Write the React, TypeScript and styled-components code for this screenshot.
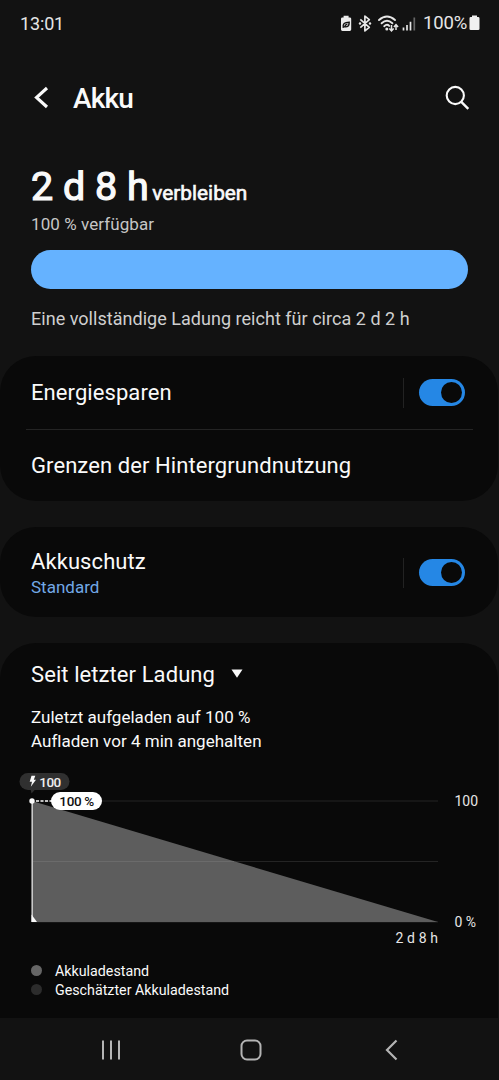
import React from "react";
import styled, { createGlobalStyle } from "styled-components";

const GlobalStyle = createGlobalStyle`
  * { box-sizing: border-box; }
  html, body { margin: 0; background: #121212; }
  body { font-family: Roboto, "Noto Sans", sans-serif; color: #fafafa; }
`;

const Screen = styled.div`
  width: 499px;
  height: 1080px;
  display: flex;
  flex-direction: column;
  background: #121212;
  overflow: hidden;
`;

const StatusBar = styled.header`
  height: 46px;
  flex: none;
  display: flex;
  align-items: center;
  justify-content: space-between;
  padding: 0 19px 0 20px;
  font-size: 18px;
  letter-spacing: -0.15px;
  color: #e6e6e6;
`;

const StatusIcons = styled.div`
  display: flex;
  align-items: center;
`;

const StatusPercent = styled.span`
  margin: 0 2px 0 6px;
  font-size: 18.5px;
  letter-spacing: -0.2px;
`;

const TitleBar = styled.div`
  height: 103px;
  flex: none;
  display: flex;
  align-items: center;
  padding: 0 29px 0 33px;
`;

const Title = styled.h1`
  flex: 1;
  margin: 2px 0 0 23px;
  font-size: 28px;
  line-height: 36px;
  font-weight: 500;
  letter-spacing: -0.8px;
`;

const Summary = styled.section`
  flex: none;
  height: 207px;
  display: flex;
  flex-direction: column;
  padding: 13px 31px 0;
`;

const Remaining = styled.div`
  display: flex;
  align-items: baseline;
  gap: 3.5px;
  height: 51px;
  line-height: 50px;
`;

const RemainingTime = styled.span`
  font-size: 39.5px;
  -webkit-text-stroke: 1.2px #fafafa;
`;

const RemainingLabel = styled.span`
  font-size: 20.8px;
  -webkit-text-stroke: 0.6px #fafafa;
`;

const Available = styled.div`
  height: 22px;
  line-height: 22px;
  font-size: 17px;
  letter-spacing: 0.08px;
  color: #c6c6c6;
`;

const ChargeBar = styled.div`
  height: 39px;
  margin-top: 15px;
  border-radius: 20px;
  background: #65b2ff;
`;

const ChargeNote = styled.div`
  margin-top: 18px;
  line-height: 24px;
  font-size: 18px;
  letter-spacing: 0.03px;
  color: #cfcfcf;
`;

const Card = styled.section<{ $height: number; $open?: boolean }>`
  flex: none;
  height: ${(p) => p.$height}px;
  margin: 0 1px ${(p) => (p.$open ? 0 : 26)}px 0;
  border-radius: ${(p) => (p.$open ? "36px 36px 0 0" : "36px")};
  background: #090909;
`;

const Row = styled.div<{ $height: number }>`
  height: ${(p) => p.$height}px;
  display: flex;
  align-items: center;
  padding: 0 33px 0 31px;
`;

const RowText = styled.div`
  flex: 1;
`;

const RowTitle = styled.div`
  font-size: 22px;
  line-height: 29px;
  letter-spacing: 0.08px;
`;

const RowValue = styled.div`
  font-size: 17px;
  line-height: 23px;
  color: #72a8e6;
`;

const RowDivider = styled.div`
  height: 1px;
  margin: 0 25px 0 26px;
  background: #242424;
`;

const ToggleArea = styled.div`
  display: flex;
  align-items: center;
  height: 30px;
  padding-left: 15px;
  border-left: 1px solid #222;
`;

const Toggle = styled.div`
  width: 46px;
  height: 27px;
  display: flex;
  justify-content: flex-end;
  align-items: center;
  padding-right: 3px;
  border-radius: 14px;
  background: #2587e5;
`;

const Knob = styled.div`
  width: 21px;
  height: 21px;
  border-radius: 50%;
  background: #090909;
`;

const PeriodSelect = styled.div`
  display: flex;
  align-items: center;
  height: 29px;
  margin: 17px 31px 0;
  font-size: 22px;
  letter-spacing: 0.08px;

  svg { margin: -3px 0 0 16px; }
`;

const ChargeInfo = styled.div`
  margin: 16px 31px 0;
  font-size: 17px;
  line-height: 24px;
  letter-spacing: 0.02px;
`;

const Chart = styled.svg`
  display: block;
  margin-top: 13px;
  font-family: Roboto, sans-serif;
`;

const Legend = styled.ul`
  list-style: none;
  margin: 15px 31px 0;
  padding: 0;
`;

const LegendItem = styled.li<{ $color: string }>`
  display: flex;
  align-items: center;
  gap: 13px;
  height: 19.5px;
  font-size: 14.25px;

  &::before {
    content: "";
    width: 11px;
    height: 11px;
    margin-top: -1px;
    border-radius: 50%;
    background: ${(p) => p.$color};
  }
`;

const NavBar = styled.nav`
  flex: none;
  height: 62px;
  display: grid;
  grid-template-columns: repeat(3, 140px);
  justify-content: center;
  align-items: center;
  justify-items: center;
  padding: 2px 0 0 2px;
  background: #121212;
`;

function Switch() {
  return (
    <ToggleArea>
      <Toggle>
        <Knob />
      </Toggle>
    </ToggleArea>
  );
}

function StatusGlyphs() {
  return (
    <svg width="78" height="24" viewBox="340 11 78 24" fill="none">
      <path d="M344.600 17.400v-1.600h5v1.600h1.200q1.400 0 1.400 1.400v10.800q0 1.400-1.400 1.400h-7.400q-1.400 0-1.400-1.400v-10.800q0-1.400 1.400-1.400z" fill="#ececec" />
      <path d="M344.300 27.800q-1.300-5.600 5.900-5.600q.2 5.400-4.600 4.600q.7-2 2.700-2.600" stroke="#121212" strokeWidth="1.400" />
      <path d="M361.300 19.300l9 8-4.400 3.600V16.100l4.400 3.600-9 8" stroke="#e6e6e6" strokeWidth="1.700" strokeLinejoin="round" />
      <circle cx="361" cy="23.500" r="1.200" fill="#e6e6e6" />
      <circle cx="371" cy="23.500" r="1.200" fill="#e6e6e6" />
      <g stroke="#e6e6e6" strokeWidth="1.900" strokeLinecap="round">
        <path d="M380 20q8-7 16 0" />
        <path d="M382.600 23.300q5.400-5 10.800 0" />
        <path d="M385.200 26.200q2.800-2.500 5-.3" />
      </g>
      <circle cx="387.800" cy="29" r="1.500" fill="#e6e6e6" />
      <path d="M392.500 25v5M390.300 28.500l2.200 2.300 2.200-2.300M397 30v-5M394.900 26.900l2.100-2.200 2.100 2.200" stroke="#e6e6e6" strokeWidth="1.500" />
      <path d="M404.500 27.500v3M408 25v5.500M411.500 21.700v8.800" stroke="#e6e6e6" strokeWidth="1.700" />
      <path d="M415.300 17.500v13" stroke="#666" strokeWidth="1.700" />
    </svg>
  );
}

function BatteryChart() {
  return (
    <Chart width="498" height="180" viewBox="0 766 498 180">
      <path d="M32 801H438M32 861.500H438M32 922H438" stroke="#242424" />
      <path d="M32 801L438 922H32z" fill="#5d5d5d" />
      <path d="M32 861.500H234" stroke="#6b6b6b" />
      <path d="M32.200 801V922" stroke="#c8c8c8" strokeWidth="1.600" />
      <path d="M31.500 914.500L37 922H31.500z" fill="#fafafa" />
      <path d="M36 801H52" stroke="#fafafa" strokeWidth="1.300" strokeDasharray="3 1.500" />
      <circle cx="32" cy="801" r="2.700" fill="#fafafa" />
      <path d="M30.500 789h5l-4 4.500z" fill="#303030" />
      <rect x="19.500" y="773" width="50" height="17" rx="8.500" fill="#303030" />
      <path d="M31.500 775.800h3.800l-1.500 4h2.200l-5.200 7 1.200-5h-2.300z" fill="#fafafa" />
      <rect x="51" y="792" width="51" height="18" rx="9" fill="#fff" />
      <g fontSize="14">
        <text x="39.300" y="786.500" fill="#eee" fontWeight="500" fontSize="13.500" textLength="22">100</text>
        <text x="59.300" y="806.200" fill="#111" fontWeight="500" fontSize="13.500" textLength="35">100 %</text>
        <text x="454.500" y="805.500" fill="#e6e6e6">100</text>
        <text x="454.500" y="926.500" fill="#e6e6e6">0 %</text>
        <text x="438" y="942.500" textAnchor="end" fill="#e6e6e6" letterSpacing="0.1">2 d 8 h</text>
      </g>
    </Chart>
  );
}

export default function App() {
  return (
    <Screen>
      <GlobalStyle />
      <StatusBar>
        <span>13:01</span>
        <StatusIcons>
          <StatusGlyphs />
          <StatusPercent>100%</StatusPercent>
          <svg width="11" height="16" viewBox="0 0 11 16">
            <path d="M3 2V.5h5V2h1.200Q10.500 2 10.500 3.300v10.400Q10.500 15 9.200 15H1.800Q.5 15 .5 13.700V3.300Q.5 2 1.800 2z" fill="#f0f0f0" />
          </svg>
        </StatusIcons>
      </StatusBar>

      <TitleBar>
        <svg width="17" height="24" viewBox="0 0 17 24" fill="none">
          <path d="M14 2L3.500 11.500 14 21" stroke="#fafafa" strokeWidth="3.100" />
        </svg>
        <Title>Akku</Title>
        <svg width="26" height="26" viewBox="0 0 26 26" fill="none">
          <circle cx="11.300" cy="10.500" r="8.600" stroke="#fafafa" strokeWidth="2.100" />
          <path d="M17.300 16.800l7 7" stroke="#fafafa" strokeWidth="2.400" />
        </svg>
      </TitleBar>

      <Summary>
        <Remaining>
          <RemainingTime>2 d 8 h</RemainingTime>
          <RemainingLabel>verbleiben</RemainingLabel>
        </Remaining>
        <Available>100 % verfügbar</Available>
        <ChargeBar />
        <ChargeNote>Eine vollständige Ladung reicht für circa 2 d 2 h</ChargeNote>
      </Summary>

      <Card $height={145}>
        <Row $height={73}>
          <RowText>
            <RowTitle>Energiesparen</RowTitle>
          </RowText>
          <Switch />
        </Row>
        <RowDivider />
        <Row $height={71}>
          <RowTitle>Grenzen der Hintergrundnutzung</RowTitle>
        </Row>
      </Card>

      <Card $height={90}>
        <Row $height={91}>
          <RowText>
            <RowTitle>Akkuschutz</RowTitle>
            <RowValue>Standard</RowValue>
          </RowText>
          <Switch />
        </Row>
      </Card>

      <Card $height={375} $open>
        <PeriodSelect>
          Seit letzter Ladung
          <svg width="12" height="9" viewBox="0 0 12 9">
            <path d="M.5.500h11L6 8.800z" fill="#fafafa" />
          </svg>
        </PeriodSelect>
        <ChargeInfo>
          Zuletzt aufgeladen auf 100 %<br />
          Aufladen vor 4 min angehalten
        </ChargeInfo>
        <BatteryChart />
        <Legend>
          <LegendItem $color="#666">Akkuladestand</LegendItem>
          <LegendItem $color="#2c2c2c">Geschätzter Akkuladestand</LegendItem>
        </Legend>
      </Card>

      <NavBar>
        <svg width="20" height="22" viewBox="0 0 20 22">
          <path d="M2 1.500v19M10 1.500v19M18 1.500v19" stroke="#b4b4b4" strokeWidth="2" />
        </svg>
        <svg width="22" height="22" viewBox="0 0 22 22" fill="none">
          <rect x="1.500" y="1.500" width="19" height="19" rx="5.500" stroke="#b4b4b4" strokeWidth="2" />
        </svg>
        <svg width="14" height="22" viewBox="0 0 14 22" fill="none">
          <path d="M12.500 1.500L3 11l9.500 9.500" stroke="#b4b4b4" strokeWidth="2.200" />
        </svg>
      </NavBar>
    </Screen>
  );
}
